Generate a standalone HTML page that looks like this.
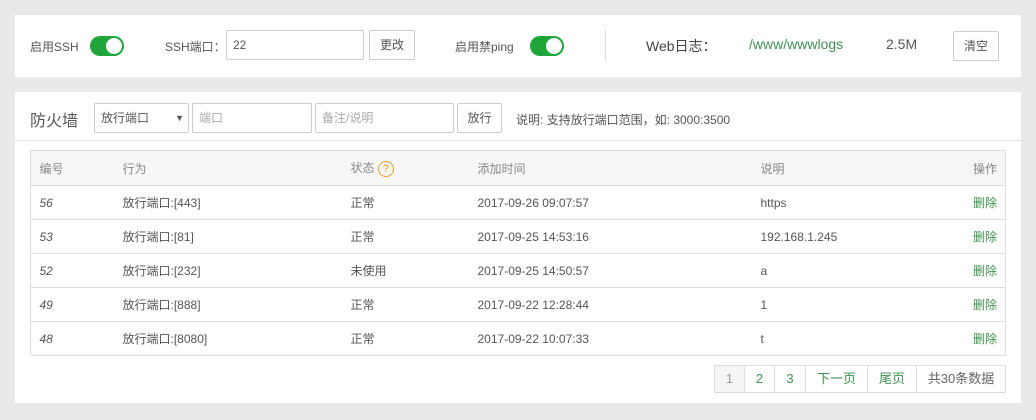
<!DOCTYPE html>
<html><head><meta charset="utf-8"><style>
*{box-sizing:border-box;margin:0;padding:0}
body{width:1036px;height:420px;background:#e9e9e9;font-family:"Liberation Sans","Noto Sans CJK SC",sans-serif;font-size:12px;color:#555;position:relative;overflow:hidden}
.p{position:absolute;background:#fff}
.a{position:absolute;white-space:nowrap}
.sw{position:absolute;width:34px;height:20px;border-radius:10px;background:#20a53a}
.sw:after{content:"";position:absolute;right:2px;top:2px;width:16px;height:16px;border-radius:50%;background:#fff}
.in{position:absolute;border:1px solid #ccc;border-radius:2px;height:30px;background:#fff;padding:0 6px;line-height:28px;color:#555}
.btn{position:absolute;border:1px solid #ccc;border-radius:2px;height:30px;background:#fff;line-height:28px;text-align:center;color:#555}
table{position:absolute;left:30px;top:150px;width:976px;border-collapse:collapse;border:1px solid #ddd;table-layout:fixed}
td,th{height:34px;border-top:1px solid #ddd;text-align:left;font-weight:normal;padding:0;color:#555}
th{background:#f6f6f6;color:#888;height:35px}
td.i{font-style:italic}
.g{color:#3f9050}
.pg{position:absolute;top:365px;height:28px;border:1px solid #ddd;border-left:none;line-height:26px;text-align:center;font-size:13px;color:#3f9050;background:#fff}
</style></head><body>
<div class="p" style="left:15px;top:15px;width:1006px;height:62px"></div>
<div class="a" style="left:30px;top:38px">启用SSH</div>
<div class="sw" style="left:90px;top:36px"></div>
<div class="a" style="left:165px;top:38px">SSH端口：</div>
<div class="in" style="left:226px;top:30px;width:138px">22</div>
<div class="btn" style="left:369px;top:30px;width:46px">更改</div>
<div class="a" style="left:455px;top:38px">启用禁ping</div>
<div class="sw" style="left:530px;top:36px"></div>
<div class="a" style="left:605px;top:30px;width:1px;height:32px;background:#ddd"></div>
<div class="a" style="left:646px;top:36px;font-size:14px;color:#444">Web日志：</div>
<div class="a" style="left:749px;top:36px;font-size:14px;color:#3f8f4f">/www/wwwlogs</div>
<div class="a" style="left:886px;top:36px;font-size:14px;color:#555">2.5M</div>
<div class="btn" style="left:953px;top:31px;width:46px;height:30px">清空</div>

<div class="p" style="left:15px;top:92px;width:1006px;height:311px"></div>
<div class="a" style="left:15px;top:140px;width:1006px;height:1px;background:#e5e5e5"></div>
<div class="a" style="left:30px;top:107px;font-size:16px;color:#555">防火墙</div>
<div class="in" style="left:94px;top:103px;width:95px">放行端口<span style="position:absolute;right:4px;font-size:9px">▼</span></div>
<div class="in" style="left:192px;top:103px;width:120px;color:#aaa">端口</div>
<div class="in" style="left:315px;top:103px;width:139px;color:#aaa">备注/说明</div>
<div class="btn" style="left:457px;top:103px;width:45px">放行</div>
<div class="a" style="left:516px;top:111px">说明: 支持放行端口范围，如: 3000:3500</div>

<table>
<colgroup><col style="width:9px"><col style="width:83px"><col style="width:228px"><col style="width:127px"><col style="width:283px"><col><col style="width:60px"></colgroup>
<tr><th></th><th>编号</th><th>行为</th><th>状态 <span style="display:inline-block;width:16px;height:16px;border:1px solid #e0a030;border-radius:50%;color:#e0a030;text-align:center;line-height:14px;font-size:11px">?</span></th><th>添加时间</th><th>说明</th><th style="text-align:right;padding-right:8px">操作</th></tr>
<tr><td></td><td class="i">56</td><td>放行端口:[443]</td><td>正常</td><td>2017-09-26 09:07:57</td><td>https</td><td class="g" style="text-align:right;padding-right:8px">删除</td></tr>
<tr><td></td><td class="i">53</td><td>放行端口:[81]</td><td>正常</td><td>2017-09-25 14:53:16</td><td>192.168.1.245</td><td class="g" style="text-align:right;padding-right:8px">删除</td></tr>
<tr><td></td><td class="i">52</td><td>放行端口:[232]</td><td>未使用</td><td>2017-09-25 14:50:57</td><td>a</td><td class="g" style="text-align:right;padding-right:8px">删除</td></tr>
<tr><td></td><td class="i">49</td><td>放行端口:[888]</td><td>正常</td><td>2017-09-22 12:28:44</td><td>1</td><td class="g" style="text-align:right;padding-right:8px">删除</td></tr>
<tr><td></td><td class="i">48</td><td>放行端口:[8080]</td><td>正常</td><td>2017-09-22 10:07:33</td><td>t</td><td class="g" style="text-align:right;padding-right:8px">删除</td></tr>
</table>

<div class="pg" style="left:714px;width:31px;border-left:1px solid #ddd;background:#f5f5f5;color:#999">1</div>
<div class="pg" style="left:745px;width:30px">2</div>
<div class="pg" style="left:775px;width:31px">3</div>
<div class="pg" style="left:806px;width:62px">下一页</div>
<div class="pg" style="left:868px;width:49px">尾页</div>
<div class="pg" style="left:917px;width:89px;color:#666">共30条数据</div>
</body></html>
